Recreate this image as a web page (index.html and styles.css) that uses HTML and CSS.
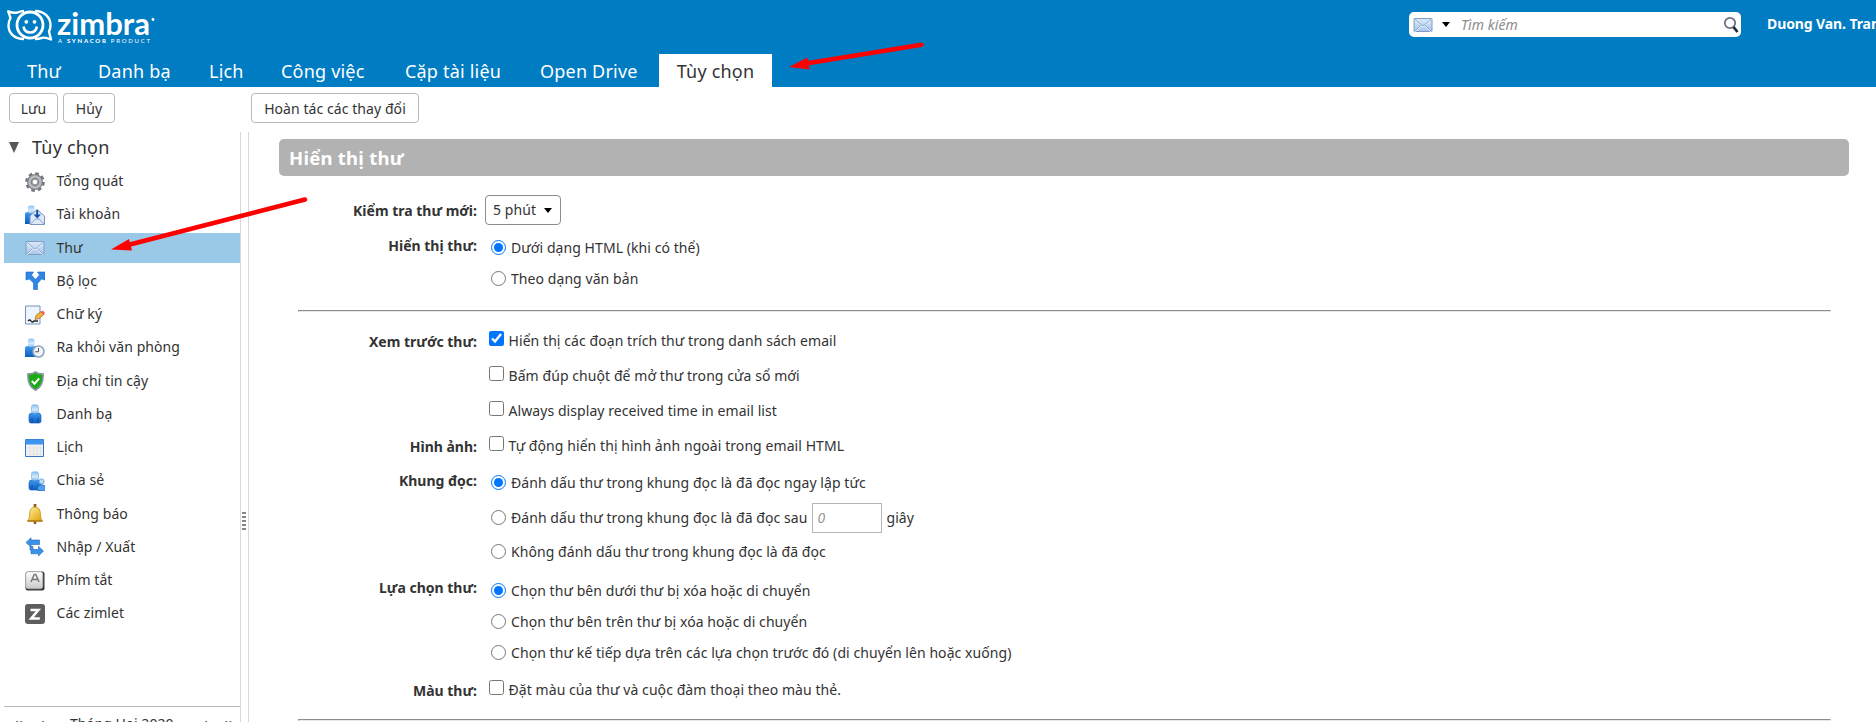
FILE: index.html
```
<!DOCTYPE html>
<html lang="vi">
<head>
<meta charset="utf-8">
<title>Zimbra: Tùy chọn</title>
<link rel="stylesheet" href="styles.css">
</head>
<body>
<svg width="0" height="0" class="defs">
  <defs>
    <linearGradient id="blue" x1="0" y1="0" x2="0" y2="1"><stop offset="0" stop-color="#3d9af0"/><stop offset="1" stop-color="#0c5cc0"/></linearGradient>
    <linearGradient id="pale" x1="0" y1="0" x2="0" y2="1"><stop offset="0" stop-color="#8cc3f2"/><stop offset=".6" stop-color="#d5ebfc"/><stop offset="1" stop-color="#8cbde8"/></linearGradient>
    <linearGradient id="mail" x1="0" y1="0" x2="0" y2="1"><stop offset="0" stop-color="#dbe9f9"/><stop offset="1" stop-color="#a9c6ea"/></linearGradient>
    <linearGradient id="gold" x1="0" y1="0" x2="1" y2="1"><stop offset="0" stop-color="#fff2a0"/><stop offset="1" stop-color="#dfa000"/></linearGradient>
    <linearGradient id="key" x1="0" y1="0" x2="0" y2="1"><stop offset="0" stop-color="#fff"/><stop offset="1" stop-color="#c9c9c9"/></linearGradient>
    <symbol id="envelope" viewBox="0 0 20 20"><rect x="1" y="3.500" width="18" height="13" rx=".6" fill="url(#mail)" stroke="#7f9cc6"/><path d="M2 4.500l6.500 5.500q1.500 1.200 3 0L18 4.500M2 16l5.500-5.500M18 16l-5.500-5.500" fill="none" stroke="#f4f9ff" transform="translate(0 .9)"/><path d="M2 4.500l6.500 5.500q1.500 1.200 3 0L18 4.500M2 16l5.500-5.500M18 16l-5.500-5.500" fill="none" stroke="#7f9fc8" stroke-width=".9"/></symbol>
    <symbol id="person" viewBox="0 0 20 20"><path d="M4 12q0-3 3-3h6q3 0 3 3v5q0 2-2 2H6q-2 0-2-2z" fill="url(#blue)" stroke="#1d62b5" stroke-width=".7"/><path d="M7 14v5M13 14v5" stroke="#0b4ea3"/><rect x="6.500" y=".8" width="7" height="8.400" rx="2" fill="url(#pale)" stroke="#7fb5e8" stroke-width=".7"/></symbol>
  </defs>
</svg>

<header class="header">
  <div class="topbar">
    <svg class="logo" width="152" height="36" viewBox="0 0 152 36">
      <g fill="none" stroke="#fff" stroke-linejoin="round">
        <path d="M18 31C7 31 2.500 24 2.500 17.500c0-3 .8-5.500 2-7.500L2.200 3.300c4 1.500 5.500 2 9.300 1.200C14 3.500 16 3 18 3" stroke-width="2.400"/>
        <path d="M29 3c10 0 15.500 7 15.500 14 0 3-.5 4.500-1.500 6.500l2 8c-4.500-2-6-2.500-9-1.700-2.500 1-4.500 1.200-7 1.200" stroke-width="2.400"/>
        <circle cx="24" cy="17" r="13" stroke-width="2.800"/>
        <path d="M17.500 18.500q1 6 6.700 6t6.700-6" stroke-width="2.600"/>
      </g>
      <circle cx="20.300" cy="13.800" r="1.900" fill="#fff"/><circle cx="28.500" cy="13.800" r="1.900" fill="#fff"/>
      <text x="51" y="26.500" class="logo-name" textLength="93" lengthAdjust="spacingAndGlyphs">zimbra</text>
      <circle cx="147" cy="11.500" r="1.400" fill="#fff"/>
      <text x="52" y="34.500" class="logo-tag" textLength="92" lengthAdjust="spacing">A <tspan class="logo-strong">SYNACOR</tspan> PRODUCT</text>
    </svg>
    <div class="search">
      <svg width="20" height="20"><use href="#envelope"/></svg>
      <span class="caret"></span>
      <span class="search-hint">Tìm kiếm</span>
      <svg width="17" height="18" viewBox="0 0 17 18"><circle cx="7" cy="7" r="5.200" fill="#fafcff" stroke="#6b7180" stroke-width="1.800"/><path d="M10.500 11l4 5" stroke="#252a3a" stroke-width="2.800"/></svg>
    </div>
    <span class="user">Duong Van. Tran</span>
  </div>
  <nav class="tabs">
    <span class="tab t1">Thư</span><span class="tab t2">Danh bạ</span><span class="tab t3">Lịch</span><span class="tab t4">Công việc</span><span class="tab t5">Cặp tài liệu</span><span class="tab t6">Open Drive</span><span class="tab active">Tùy chọn</span>
  </nav>
</header>

<div class="toolbar">
  <span class="btn save">Lưu</span><span class="btn cancel">Hủy</span><span class="btn undo">Hoàn tác các thay đổi</span>
</div>

<div class="body">
  <aside class="sidebar">
    <div class="tree-head"><span class="arrow-down"></span>Tùy chọn</div>
    <ul class="tree">
      <li><svg class="ic" viewBox="0 0 20 20"><circle cx="10" cy="10" r="8.300" fill="none" stroke="#70747a" stroke-width="3" stroke-dasharray="3.500 3.018"/><circle cx="10" cy="10" r="5.500" fill="none" stroke="#80848a" stroke-width="5"/><circle cx="10" cy="10" r="5.500" fill="none" stroke="#b9bcc1" stroke-width="2.400"/><circle cx="10" cy="10" r="2.800" fill="#fff" stroke="#777" stroke-width=".8"/></svg>Tổng quát</li>
      <li><svg class="ic" viewBox="0 0 20 20"><path d="M0 9q0-2 3-2h5q3 0 3 3v9H0z" fill="url(#blue)"/><rect x="3" y=".5" width="6.500" height="8" rx="2" fill="url(#pale)"/><path d="M5 11l7-6.500 7.500 6.500v8.500H5z" fill="#dce8f7" stroke="#7a96bd"/><path d="M5.500 19l5-5h3.500l5 5" fill="none" stroke="#8fa8c8"/><path d="M12.200 5v5" stroke="#1554ad" stroke-width="2"/><path d="M8.500 9.500h7.500l-3.800 4z" fill="#1554ad"/></svg>Tài khoản</li>
      <li class="selected"><svg class="ic"><use href="#envelope"/></svg>Thư</li>
      <li><svg class="ic" viewBox="0 0 20 20"><path d="M8.500 18.500v-6.500L4.500 8 1 9V1h7.500L6.500 4l4 4.500 4-4.500-2-3H20v8l-3.500-1-4 4.500v6z" fill="#2e86e6" stroke="#1d66c4" stroke-width=".6"/></svg>Bộ lọc</li>
      <li><svg class="ic" viewBox="0 0 20 20"><path d="M.5 1H15V19H.5z" fill="#edf4fd" stroke="#7693bb"/><path d="M3 16q2-2 3 0t3 0h4" fill="none" stroke="#222" stroke-width="1.300"/><path d="M10 14.500l1-4 5-4 3 3-5 4z" fill="#f0b43a" stroke="#9a6718" stroke-width=".7"/><path d="M15.500 7l2-1.500 2.500 2-1.500 2.500z" fill="#ec6565"/></svg>Chữ ký</li>
      <li><svg class="ic" viewBox="0 0 20 20"><path d="M0 10q0-2 3-2h6q3 0 3 3v8H0z" fill="url(#blue)"/><rect x="3" y=".5" width="6.500" height="8.500" rx="2" fill="url(#pale)"/><circle cx="13.500" cy="13.500" r="5.500" fill="#f2f5fa" stroke="#91a5bf" stroke-width="1.600"/><path d="M13.500 10v3.800H10" fill="none" stroke="#555"/></svg>Ra khỏi văn phòng</li>
      <li><svg class="ic" viewBox="0 0 20 20"><path d="M10.500.8q3 2.500 7.500 2 1 12-7.500 16.500Q2 14.800 3 2.800q4.500.5 7.500-2z" fill="#1cab16" stroke="#8c98a5" stroke-width="1.600"/><path d="M6.800 9.800l2.700 3 4.700-5.500" fill="none" stroke="#fff" stroke-width="2"/></svg>Địa chỉ tin cậy</li>
      <li><svg class="ic"><use href="#person"/></svg>Danh bạ</li>
      <li><svg class="ic" viewBox="0 0 20 20"><path d="M.5 1.500h18v17H.5z" fill="#f4f4f4" stroke="#3474c4"/><path d="M.5 1.500h18v5H.5z" fill="#3f95ef"/><path d="M5 7v11M8.500 7v11M12 7v11M15.500 7v11M1 10h17M1 13h17M1 16h17" stroke="#dedede" stroke-width=".8"/></svg>Lịch</li>
      <li><svg class="ic" viewBox="0 0 20 20"><use href="#person" width="20" height="20"/><circle cx="16.500" cy="10.500" r="2.600" fill="#b8dcfa" stroke="#458dd8" stroke-width=".7"/><path d="M12.500 19.500v-2.500q0-3 3-3h2q3 0 3 3v2.500z" fill="#4ba0f2" stroke="#1d62b5" stroke-width=".7"/></svg>Chia sẻ</li>
      <li><svg class="ic" viewBox="0 0 20 20"><path d="M10 0v4M10 17v3" stroke="#8b5a13" stroke-width="2.600"/><path d="M2.500 17q2-2 2-6 0-8 5.500-8t5.500 8q0 4 2 6z" fill="url(#gold)" stroke="#c89326" stroke-width=".8"/><path d="M2.500 17h15" stroke="#b27b1c" stroke-width="1.600"/></svg>Thông báo</li>
      <li><svg class="ic" viewBox="0 0 20 20"><g fill="#3a93e8" stroke="#2068b8" stroke-width=".6"><path d="M1 5.500L6 .8v2.200h8.500v4.500H6v2.700z"/><path d="M18.500 14l-5 5v-2.200H6v-3.800H5V9.500h3v3h5.500V9.300z"/></g></svg>Nhập / Xuất</li>
      <li><svg class="ic" viewBox="0 0 20 20"><rect x=".5" y=".5" width="19" height="19" rx="2.500" fill="#333"/><rect x=".8" y=".8" width="17" height="17" rx="2.500" fill="url(#key)" stroke="#aaa" stroke-width=".6"/><path d="M6 11l3.200-7.500h1.600l3.200 7.500M7.200 8.500h5.600" fill="none" stroke="#777" stroke-width="1.400"/></svg>Phím tắt</li>
      <li><svg class="ic" viewBox="0 0 20 20"><rect width="20" height="20" rx="3" fill="#5d5d5f"/><path d="M5.500 6h7.800l-7 8.500h8.500" fill="none" stroke="#fff" stroke-width="2.600"/></svg>Các zimlet</li>
    </ul>
    <div class="minical"><b>«</b><b>‹</b><span>Tháng Hai 2020</span><b>›</b><b>»</b></div>
  </aside>
  <div class="sash"><i></i><i></i><i></i><i></i><i></i></div>

  <main class="main">
    <h1 class="title">Hiển thị thư</h1>
    <div class="row r-select"><div class="label">Kiểm tra thư mới:</div><span class="select">5 phút<span class="caret"></span></span></div>
    <div class="row r-view"><div class="label">Hiển thị thư:</div>
      <div class="opts radios">
        <label class="opt"><input type="radio" name="view" checked>Dưới dạng HTML (khi có thể)</label>
        <label class="opt gap11"><input type="radio" name="view">Theo dạng văn bản</label>
      </div></div>
    <hr class="rule">
    <div class="row r-preview"><div class="label">Xem trước thư:</div>
      <div class="opts checks">
        <label class="opt"><input type="checkbox" checked>Hiển thị các đoạn trích thư trong danh sách email</label>
        <label class="opt gap15"><input type="checkbox">Bấm đúp chuột để mở thư trong cửa sổ mới</label>
        <label class="opt gap15"><input type="checkbox">Always display received time in email list</label>
      </div></div>
    <div class="row r-image"><div class="label">Hình ảnh:</div>
      <div class="opts checks"><label class="opt"><input type="checkbox">Tự động hiển thị hình ảnh ngoài trong email HTML</label></div></div>
    <div class="row r-read"><div class="label">Khung đọc:</div>
      <div class="opts radios">
        <label class="opt"><input type="radio" name="read" checked>Đánh dấu thư trong khung đọc là đã đọc ngay lập tức</label>
        <label class="opt gap15"><input type="radio" name="read">Đánh dấu thư trong khung đọc là đã đọc sau<span class="delay">0</span>giây</label>
        <label class="opt gap14"><input type="radio" name="read">Không đánh dấu thư trong khung đọc là đã đọc</label>
      </div></div>
    <div class="row r-next"><div class="label">Lựa chọn thư:</div>
      <div class="opts radios">
        <label class="opt"><input type="radio" name="next" checked>Chọn thư bên dưới thư bị xóa hoặc di chuyển</label>
        <label class="opt gap11"><input type="radio" name="next">Chọn thư bên trên thư bị xóa hoặc di chuyển</label>
        <label class="opt gap11"><input type="radio" name="next">Chọn thư kế tiếp dựa trên các lựa chọn trước đó (di chuyển lên hoặc xuống)</label>
      </div></div>
    <div class="row r-color"><div class="label">Màu thư:</div>
      <div class="opts checks"><label class="opt"><input type="checkbox">Đặt màu của thư và cuộc đàm thoại theo màu thẻ.</label></div></div>
    <hr class="rule last">
  </main>
</div>

<svg class="marks" width="1876" height="722">
  <g stroke="red" stroke-width="4.500" stroke-linecap="round"><path d="M921.500 44.700L806 63.500"/><path d="M305 199.500L128 245"/></g>
  <g fill="red"><path d="M789 67l18.500-9.500 2 12z"/><path d="M111 249.500l18-10.500 3 11.500z"/></g>
</svg>
</body>
</html>
```
FILE: styles.css
```
* { box-sizing: border-box; }
body {
  margin: 0;
  height: 722px;
  overflow: hidden;
  display: flex;
  flex-direction: column;
  background: #fff;
  color: #333;
  font: 14px/20px "Noto Sans", "Open Sans", sans-serif;
  letter-spacing: 0.07px;
}
.defs { position: absolute; }
.header { height: 87px; flex: none; background: #007cc3; color: #fff; }
.topbar { height: 54px; display: flex; align-items: flex-start; padding-left: 7px; }
.logo { margin: 8px 0 0 -1px; flex: none; overflow: visible; }
.logo-name { font: 700 31px Lato, sans-serif; fill: #fff; letter-spacing: 0; }
.logo-tag { font: 6px Lato, sans-serif; fill: #fff; letter-spacing: 0; }
.logo-strong { font-weight: 900; }
.search {
  width: 332px; height: 25px; margin: 12px 26px 0 1251px; flex: none;
  display: flex; align-items: center; padding: 0 1px 0 4px;
  background: #fff; border-radius: 5px;
}
.caret { border: 4.5px solid transparent; border-top: 5px solid #000; border-bottom: 0; margin-left: 9px; }
.search-hint { margin-left: 11px; flex: 1; color: #8c8c8c; font-style: italic; }
.user { margin-top: 14px; font-weight: 700; white-space: nowrap; letter-spacing: -0.1px; }
.tabs { display: flex; height: 33px; font-size: 18px; line-height: 34px; letter-spacing: 0.2px; white-space: nowrap; }
.tab { flex: none; }
.t1 { width: 71px; margin-left: 27px; }
.t2 { width: 111px; }
.t3 { width: 72px; }
.t4 { width: 124px; }
.t5 { width: 135px; }
.t6 { width: 119px; }
.tab.active { width: 113px; background: #fff; color: #333; text-align: center; }
.toolbar { height: 45px; flex: none; display: flex; align-items: flex-start; padding: 6px 0 0 9px; }
.btn { height: 30px; line-height: 29px; border: 1px solid #bababa; border-radius: 4px; text-align: center; white-space: nowrap; }
.save { width: 49px; }
.cancel { width: 52px; margin-left: 5px; }
.undo { width: 168px; margin-left: 136px; }
.body { flex: 1; min-height: 0; display: flex; overflow: hidden; }
.sidebar { width: 240px; padding-left: 4px; display: flex; flex-direction: column; flex: none; }
.tree-head { height: 34.5px; flex: none; line-height: 30px; font-size: 18px; letter-spacing: 0.2px; display: flex; align-items: flex-start; padding-left: 5px; }
.arrow-down { border: 5px solid transparent; border-top: 11px solid #585858; border-bottom: 0; margin: 10px 13px 0 0; }
.tree { list-style: none; margin: 0; padding: 0; flex: none; }
.tree li { display: flex; align-items: center; height: 30px; margin-bottom: 3.25px; padding: 0 0 1px 21px; }
.tree li.selected { background: #99c9e7; }
.ic { width: 20px; height: 20px; margin: 1px 11.5px 0 0; flex: none; }
.minical {
  margin-top: 73.5px; flex: none; border-top: 1px solid #b8b8b8; height: 40px; padding-top: 7px;
  display: grid; grid-template-columns: 26px 31px 134px 20px 20px; padding-left: 9px;
}
.minical b { font-size: 17px; }
.sash { width: 9px; flex: none; border: 1px solid #d8d8d8; border-width: 0 1px; padding: 380px 2px 0 1px; display: flex; flex-direction: column; gap: 2px; }
.sash i { height: 2px; flex: none; background: #858585; width: 4px; }
.main { flex: 1; padding: 7px 27px 0 30px; }
.title { margin: 0; height: 37px; padding-left: 10px; background: #b2b2b2; color: #fff; font-size: 18.5px; line-height: 38px; letter-spacing: 0.25px; border-radius: 5px; }
.row { display: flex; align-items: flex-start; }
.label { width: 198px; height: 20px; line-height: 19px; flex: none; text-align: right; font-weight: 700; letter-spacing: 0; white-space: nowrap; }
.select { width: 76px; height: 30px; margin: -6px 0 0 8px; padding-left: 7px; border: 1px solid #8c8c8c; border-radius: 4px; display: flex; align-items: center; }
.select .caret { margin-left: 8px; }
.opts { display: flex; flex-direction: column; }
.opt { display: flex; align-items: flex-start; height: 20px; line-height: 18px; white-space: nowrap; }
.opt input { width: 15px; height: 15px; flex: none; }
.radios { margin-left: 14px; }
.radios input { margin: 1px 5px 0 0; }
.checks { margin-left: 12px; }
.checks input { margin: -1px 4.500px 0 0; }
.gap11 { margin-top: 11px; }
.gap14 { margin-top: 14px; }
.gap15 { margin-top: 15px; }
.r-select { margin-top: 25px; height: 35px; }
.r-view .opts, .r-read .opts { margin-top: 3px; }
.rule { margin: 20px 18px 0 19px; height: 2px; border: 1px solid; border-color: #8d8d8d #e8e8e8 #e8e8e8 #8d8d8d; }
.r-preview { margin-top: 20px; }
.r-image { margin-top: 15px; }
.r-read { margin-top: 14px; }
.r-next { margin-top: 15px; }
.r-next .opts { margin-top: 4px; }
.r-color { margin-top: 17px; }
.rule.last { margin-top: 18px; }
.delay { width: 70px; height: 30px; line-height: 28px; margin: -6px 5px 0 4px; padding-left: 5px; border: 1px solid #b5b5b5; color: #999; font-style: italic; }
.marks { position: absolute; left: 0; top: 0; pointer-events: none; }
```
